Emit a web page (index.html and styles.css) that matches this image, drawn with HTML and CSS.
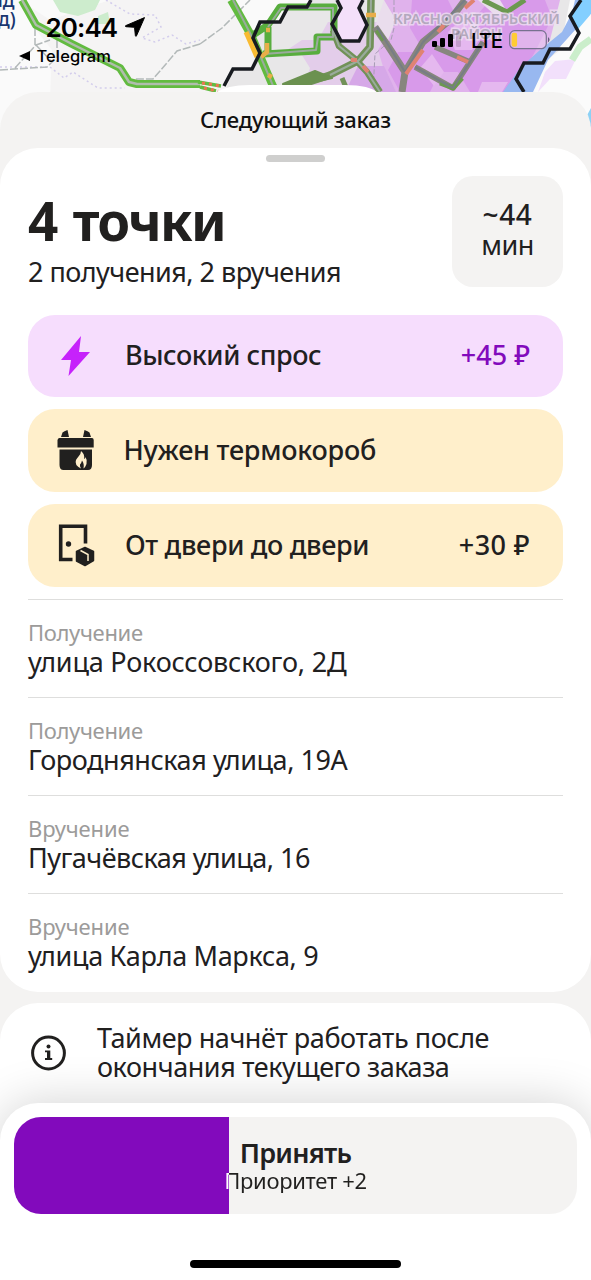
FILE: index.html
```html
<!DOCTYPE html>
<html lang="ru">
<head>
<meta charset="utf-8">
<title>Следующий заказ</title>
<link rel="stylesheet" href="styles.css">
</head>
<body>
<div class="screen">
  <svg class="map" viewBox="0 0 591 148" aria-hidden="true">
    <rect width="591" height="148" fill="#fafafa"/>
    <path d="M36 30L52 50L50 100H240L260 60L248 30L234 0H110L50 20L20 0Z" fill="#f5f4f4"/>
    <path d="M53 0H100L95 10L78 16L60 12Z M98 16L108 12L110 24L98 24Z" fill="#cdeccd"/>
    <g fill="none" stroke="#d3cdec" stroke-width="1.500" stroke-dasharray="2 3">
      <path d="M106 0L130 14L155 15L161 27L142 38L155 42L172 35L186 44L200 40"/>
      <path d="M0 67H50L64 78L73 72L98 88L125 88"/>
    </g>
    <g fill="none" stroke="#b3b9b9" stroke-width="1.500" stroke-dasharray="8 2">
      <path d="M0 70L47 67L52 62L36 45M15 68L36 45L50 40M35 28V45M57 40V62M200 44L177 51L160 71L153 79H135M200 44L222 28L250 0"/>
    </g>
    <path d="M225 92L233 69H252L260 53L253 38L260 22H280L288 7H307L311 0H570L560 50L505 92Z" fill="#e8e7e8"/>
    <path d="M284 52L302 40H318L328 22H400V92H302L310 68L300 52Z" fill="#e3cdea"/>
    <path d="M337 0L341 8L332 24L341 41H359L367 25L359 8L363 0Z" fill="#f4e0fa"/>
    <path d="M384 0H560L550 40L510 92H376L384 70L378 50L390 30Z" fill="#e0b2ec"/>
    <path d="M412 0H448L456 16L478 14L490 0H545L552 18L536 50L512 92H470L458 72H440L430 92H400L388 70L398 52H424L410 28Z" fill="#d89aea"/>
    <path d="M345 92L358 66H384L396 92Z" fill="#d6a8e8"/>
    <path d="M448 32L458 22H474L482 36L472 50H455Z M420 68L432 54L444 72L434 86Z M482 82H508L502 92H478Z" fill="#e5b8ef"/>
    <path d="M384 0L396 20L388 40L376 24Z M478 0H500L506 10L496 16Z" fill="#eadded"/>
    <path d="M575 0H591V12L567 39L548 60L533 92H503L520 68L540 50L562 32L572 13Z" fill="#98b8f0"/>
    <path d="M581 0H591V14L574 40L579 33L570 16Z" fill="#83cfff"/>
    <path d="M591 14L567 42L548 64L535 92L591 148Z" fill="#fbfbfb"/>
    <path d="M555 61L576 59L566 79H550L538 92L545 72Z" fill="#f2e0fb"/>
    <path d="M572 60L580 47L591 39" fill="none" stroke="#cbeecb" stroke-width="7"/>
    <path d="M591 108L586 117L591 128" fill="#8dd1f5"/>
    <path d="M394 0V28L391 40L375 54L373 92" fill="none" stroke="#a89db5" stroke-dasharray="5 2"/>
    <g fill="none" stroke-linejoin="round">
      <g stroke="#62bb40" stroke-width="8">
        <path d="M22 0L36 25L72 44L120 68L129 82L137 84H200"/>
        <path d="M231 0L238 12L252 37L272 84L276 92"/>
      </g>
      <path d="M22 0L36 25L72 44L120 68L129 82L137 84H200" stroke="#b0bdad" stroke-width="2.500"/>
      <path d="M198 82L221 86M200 87L216 91" stroke="#62bb40" stroke-width="3.500"/>
      <path d="M202 83L221 86M204 88L218 91" stroke="#ed7550" stroke-width="3" stroke-dasharray="3 4"/>
      <path d="M253 35L268 25L280 7H334V37H317V51L263 54M268 27V52" stroke="#58ad3e" stroke-width="7"/>
      <g stroke="#719158" stroke-width="7.500">
        <path d="M371 0L370 47L358 61L330 75L300 85"/>
        <path d="M333 30L339 46L355 59L367 72L380 92" stroke-width="6.500"/>
        <path d="M342 78L348 92" stroke-width="5"/>
      </g>
      <g stroke="#87867e" stroke-width="7">
        <path d="M375 27L388 46L405 72L402 92M405 72L423 42L450 20L465 0"/>
        <path d="M415 67L453 88L483 42M435 47L470 62" stroke-width="5.500"/>
      </g>
      <path d="M483 0L507 12L525 0M440 83L453 88L462 78M377 30L384 40" stroke="#6c9850" stroke-width="5"/>
      <path d="M283 84L315 71L332 78L284 89Z" fill="#6b9150" stroke="#6b9150" stroke-width="2"/>
      <g stroke="#9aab9c" stroke-width="2">
        <path d="M233 0L253 39L274 88M371 0L370 47L358 61L330 75M333 30L339 46L355 59L367 72L380 92M264 54L316 50L318 37H333V8H281L268 27"/>
      </g>
      <path d="M377 27L405 72L423 42L465 0M415 67L453 88L483 42" stroke="#777d85" stroke-width="2"/>
      <path d="M246 32L257 57" stroke="#f9bb32" stroke-width="5"/>
      <path d="M267 43V52L261 57M266 30H270M268 75L272 77M366 15H376" stroke="#e8ae49" stroke-width="4.500"/>
      <path d="M406 74L423 50M438 32L444 25M465 8L474 0M351 60H357M363 66L368 72M457 57L468 62" stroke="#df8372" stroke-width="4"/>
      <g stroke="#181b20" stroke-width="3.500" stroke-linejoin="miter">
        <path d="M224 86L233 69H252L260 53L253 38L260 22H280L288 7H307L311 0"/>
        <path d="M337 0L341 8L332 24L341 41H359L367 25L359 8L363 0"/>
        <path d="M581 0L570 16L579 33L570 49H550L543 63H524L516 79L524 92"/>
      </g>
    </g>
    <path d="M216 93Q226 85 250 85H345Q370 85 378 93Z" fill="#fff"/>
    <g class="map-place"><text x="-8" y="7">ад</text><text x="-2" y="26">д)</text></g>
    <g class="map-area"><text x="393" y="24" textLength="167">КРАСНООКТЯБРЬСКИЙ</text><text x="451" y="39" textLength="51">РАЙОН</text></g>
  </svg>

  <header class="status">
    <div class="status-left">
      <div class="clock"><span>20:44</span>
        <svg width="20" height="20" viewBox="0 0 20 20"><path d="M19.500 .6L.6 8.700Q-.2 9.300 1 9.700L9.500 10.300L10.400 18.700Q10.800 20 11.500 18.800Z" stroke="#000"/></svg>
      </div>
      <div class="back"><svg width="11" height="10" viewBox="0 0 11 10"><path d="M0 5L11 0V10Z"/></svg><span>Telegram</span></div>
    </div>
    <div class="status-right">
      <svg width="30" height="16" viewBox="0 0 30 16"><rect x="0" y="10" width="5" height="6" rx="1.300"/><rect x="8" y="7" width="5" height="9" rx="1.300"/><rect x="16" y="3" width="5" height="13" rx="1.300"/><rect x="24" y="0" width="5" height="16" rx="1.300" opacity=".15"/></svg>
      <span class="net">LTE</span>
      <svg width="41" height="20" viewBox="0 0 41 20"><rect x=".7" y=".7" width="36.600" height="18" rx="5" fill="#ecd5f0" fill-opacity=".45" stroke="#77718f" stroke-width="1.200"/><rect x="2.600" y="2.700" width="5.500" height="14" rx="2" fill="#fc3"/><path d="M39 7Q42 9.700 39 12.500Z" fill="#62617b"/></svg>
    </div>
  </header>

  <main class="sheet">
    <h2 class="sheet-title"><span>Следующий заказ</span></h2>
    <section class="card order">
      <div class="grabber"></div>
      <div class="summary">
        <div>
          <h1 class="points">4 точки</h1>
          <p class="detail">2 получения, 2 вручения</p>
        </div>
        <div class="eta"><span class="eta-num">~44</span><span class="eta-unit">мин</span></div>
      </div>
      <div class="tags">
        <div class="tag demand">
          <svg class="tag-icon" viewBox="0 0 40 44"><path d="M24 2L4 26H14L11.500 42L33 18H22Z" fill="#c622fb"/></svg>
          <span class="t1">Высокий спрос</span><span class="price">+45 ₽</span>
        </div>
        <div class="tag">
          <svg class="tag-icon" viewBox="0 0 40 44"><g fill="#21201f"><path d="M4 8L5.500 3.500Q7 2 10.500 1L12 8ZM26 8L27.500 1Q31 2 32.500 3.500L34 8Z"/><path d="M2.500 9H35Q36.500 9 36.700 11V18.500H.5V11Q1 9 2.500 9Z"/><path d="M2.500 20.500H35V36Q35 41 31 41H6.500Q2.500 41 2.500 36Z"/></g><path d="M24 39.500Q17 36 19 31Q20 29 21.500 27.500Q24 25 24 22Q28 25 27 30Q28.500 29.500 28.500 28Q30.500 31 29.500 35Q28.500 38 26.500 39.500Q27.500 35 25 31.500Q24.500 34 23 35.500Q22.500 37 24 39.500Z" fill="#ffefcb"/></svg>
          <span class="t2">Нужен термокороб</span>
        </div>
        <div class="tag">
          <svg class="tag-icon" viewBox="0 0 40 44"><path d="M28.500 19.500V2.200H3.700V35.500H15.500" fill="none" stroke="#21201f" stroke-width="3.600"/><circle cx="11.500" cy="20" r="2.700" fill="#21201f"/><path d="M28 23.500L36.500 27.500V36.500L28 41.500L19.500 37V27.500Z" fill="#21201f" stroke="#21201f" stroke-width="1.500" stroke-linejoin="round"/><path d="M23.500 26.500L31 30.500V37" fill="none" stroke="#ffefcb" stroke-width="1.500"/></svg>
          <span class="t3">От двери до двери</span><span class="price p3">+30 ₽</span>
        </div>
      </div>
      <ul class="stops">
        <li><span class="kind">Получение</span><span class="addr a1">улица Рокоссовского, 2Д</span></li>
        <li><span class="kind">Получение</span><span class="addr a2">Городнянская улица, 19А</span></li>
        <li><span class="kind give">Вручение</span><span class="addr a3">Пугачёвская улица, 16</span></li>
        <li><span class="kind give">Вручение</span><span class="addr a4">улица Карла Маркса, 9</span></li>
      </ul>
    </section>
    <section class="card notice">
      <svg width="36" height="36" viewBox="0 0 36 36"><circle cx="18.500" cy="18" r="15.900" fill="none" stroke="#21201f" stroke-width="3"/><circle cx="18.500" cy="11.500" r="2" fill="#21201f"/><path d="M15 15.500H20.300V23H22.200V25H15V23H17V17.300H15Z" fill="#21201f"/></svg>
      <p><span class="n1">Таймер начнёт работать после</span><br><span class="n2">окончания текущего заказа</span></p>
    </section>
  </main>

  <footer class="dock">
    <button class="accept">
      <span class="accept-title"><span>Принять</span></span>
      <span class="accept-sub"><span>Приоритет +2</span></span>
    </button>
    <div class="home"></div>
  </footer>
</div>
</body>
</html>
```
FILE: styles.css
```css
* { box-sizing: border-box; }
body, h1, h2, p, ul { margin: 0; padding: 0; }
body { background: #fff; font-family: "Noto Sans", sans-serif; color: #21201f; }
.screen { position: relative; width: 591px; height: 1280px; overflow: hidden; display: flex; flex-direction: column; }
.map { position: absolute; top: 0; left: 0; width: 591px; height: 148px; }
.map-place { font: 500 19px "Noto Sans", sans-serif; fill: #18356f; }
.map-area { font: 600 15px "Noto Sans", sans-serif; fill: #b3a9be; stroke: #eee0f1; stroke-opacity: .8; stroke-width: 3px; paint-order: stroke; }

.status { position: relative; height: 92px; flex: none; display: flex; justify-content: space-between; padding: 12px 41px 0 19px; font-family: Inter, sans-serif; color: #000; }
.clock { display: flex; align-items: center; gap: 8px; height: 31px; padding-left: 26.500px; font-size: 26px; font-weight: 600; letter-spacing: -.9px; }
.clock span { width: 71.500px; white-space: nowrap; }
.clock svg { margin-bottom: 2px; }
.back { display: flex; align-items: center; gap: 6.500px; height: 26px; font-size: 16.500px; font-weight: 500; letter-spacing: .1px; }
.status-right { display: flex; align-items: flex-start; padding-top: 18px; }
.status-right svg:first-child { margin: 1px 0 0 1px; }
.net { width: 31px; margin: 0 7px 0 9px; font-size: 20.500px; line-height: 21px; font-weight: 500; letter-spacing: -1.700px; }

.sheet { position: relative; flex: 1; border-radius: 38px 38px 0 0; background: #f4f3f2; display: flex; flex-direction: column; }
.sheet-title { height: 56px; flex: none; text-align: center; font-size: 22px; line-height: 54px; font-weight: 500; letter-spacing: -.270px; color: #111; }
.card { background: #fff; border-radius: 38px; }
.order { height: 844px; padding: 7px 28px 0; }
.grabber { width: 59px; height: 6.500px; border-radius: 4px; background: #cfcfce; margin: 0 auto; }
.summary { display: flex; justify-content: space-between; padding-top: 14.500px; }
.points { font-size: 53px; line-height: 60px; font-weight: 700; margin-top: 15px; letter-spacing: -1.700px; word-spacing: 4px; }
.detail { font-size: 27px; line-height: 34px; margin-top: 4px; white-space: nowrap; letter-spacing: -.530px; }
.eta { width: 111px; height: 111px; border-radius: 21px; background: #f4f3f2; display: flex; flex-direction: column; align-items: center; padding-top: 22px; font-size: 27px; line-height: 31px; }
.eta-num { font-weight: 500; font-size: 28px; letter-spacing: .7px; padding-top: 1px; margin-bottom: -1px; }
.eta-unit { letter-spacing: -.5px; }
.tags { display: flex; flex-direction: column; gap: 12.300px; margin-top: 25.500px; }
.tag { height: 82.700px; border-radius: 27px; background: #ffefcb; display: flex; align-items: center; padding: 0 33px 0 29px; font-size: 27px; line-height: 34px; font-weight: 500; }
.tag span { padding-bottom: 1px; white-space: nowrap; }
.t1 { letter-spacing: -.420px; }
.tag .t2 { letter-spacing: -.230px; margin-left: -1.500px; }
.t3 { letter-spacing: -.320px; }
.demand { background: #f6ddfd; }
.demand .price { color: #820abc; }
.tag-icon { width: 40px; height: 44px; flex: none; margin-right: 28px; }
.price { margin-left: auto; }
.p3 { letter-spacing: .4px; }
.stops { list-style: none; margin-top: 11.500px; }
.stops li { height: 98px; border-top: 1.500px solid #dededd; padding-top: 19px; display: flex; flex-direction: column; }
.kind { font-size: 22px; line-height: 26px; color: #9c9b9a; letter-spacing: -.330px; }
.give { letter-spacing: -.150px; }
.addr { font-size: 27px; line-height: 30px; margin-top: 2.500px; white-space: nowrap; }
.a1 { letter-spacing: -.2px; }
.a2 { letter-spacing: -.450px; }
.a3 { letter-spacing: -.520px; }
.a4 { letter-spacing: -.330px; }
.notice { flex: 1; margin-top: 11px; padding: 20px 30px; display: flex; gap: 31px; font-size: 27px; line-height: 29px; white-space: nowrap; letter-spacing: -.440px; }
.notice svg { margin-top: 12px; flex: none; }

.dock { position: absolute; left: 0; right: 0; bottom: 0; height: 177px; border-radius: 38px 38px 0 0; background: #fff; padding: 14px 14px 0; box-shadow: 0 0 48px rgba(0,0,0,.18); }
.accept { display: flex; flex-direction: column; width: 563px; height: 97px; padding: 21px 0 0; border: 0; border-radius: 27px; font: inherit; color: #21201f; background: linear-gradient(90deg, #820abc 215.500px, #f4f3f2 215.500px); text-align: center; }
.accept-title { width: 563px; font-size: 27px; line-height: 29px; font-weight: 600; letter-spacing: -.750px; }
.accept-sub { width: 563px; font-size: 22px; line-height: 26px; letter-spacing: -.3px; color: transparent; background: linear-gradient(90deg, #fff 215.500px, #21201f 215.500px); -webkit-background-clip: text; background-clip: text; }
.home { width: 211px; height: 8px; border-radius: 4px; background: #000; margin: 46px auto 0; }
```
